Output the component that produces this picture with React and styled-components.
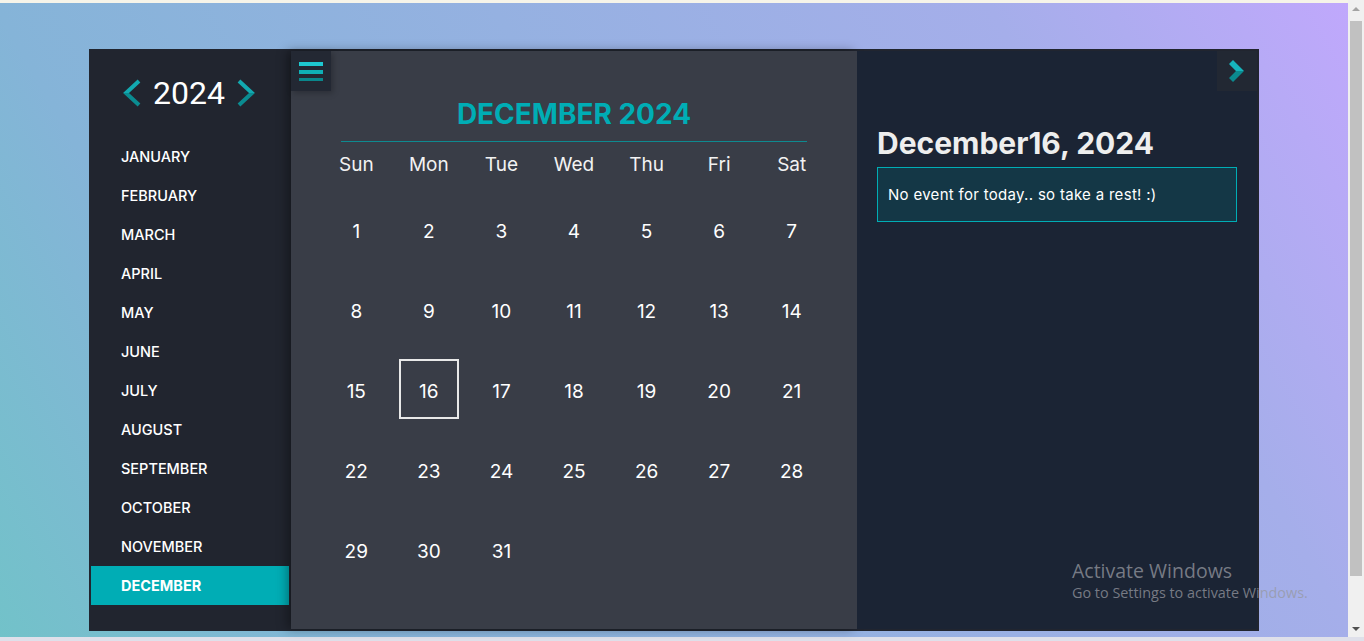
import React from 'react';
import styled, { createGlobalStyle } from 'styled-components';

const GlobalStyle = createGlobalStyle`
  html, body {
    margin: 0;
    padding: 0;
    height: 100%;
    overflow: hidden;
  }
  body {
    font-family: "Inter", "Noto Sans", sans-serif;
  }
  #root {
    height: 100%;
  }
`;

const MONTHS = [
  'JANUARY', 'FEBRUARY', 'MARCH', 'APRIL', 'MAY', 'JUNE',
  'JULY', 'AUGUST', 'SEPTEMBER', 'OCTOBER', 'NOVEMBER', 'DECEMBER',
];
const DAYS = ['Sun', 'Mon', 'Tue', 'Wed', 'Thu', 'Fri', 'Sat'];

const Page = styled.div`
  position: relative;
  height: 641px;
  display: flex;
  flex-direction: column;
`;

const Row = styled.div`
  flex: 1;
  display: flex;
  min-height: 0;
`;

const MainCol = styled.div`
  flex: 1;
  display: flex;
  flex-direction: column;
`;

const TopStrip = styled.div`
  height: 3px;
  background: #f6f4e9;
`;

const Stage = styled.div`
  flex: 1;
  display: flex;
  justify-content: center;
  align-items: flex-start;
  padding-top: 46px;
  background: linear-gradient(60deg, #72c2c9 0%, #85b4d8 21%, #a5aeea 79%, #c0a8fc 100%);
`;

const BottomStrip = styled.div`
  height: 4px;
  background: #dfe0ea;
`;

const Scrollbar = styled.div`
  width: 16px;
  background: #f0f0f0;
  display: flex;
  flex-direction: column;
  align-items: center;
`;

const ScrollArrow = styled.div`
  height: 17px;
  display: flex;
  align-items: center;
  justify-content: center;
  &::after {
    content: '';
    border-left: 4px solid transparent;
    border-right: 4px solid transparent;
    ${(p) => (p.$down
      ? 'border-top: 4px solid #505050;'
      : 'border-bottom: 4px solid #a3a3a3;')}
  }
`;

const ScrollThumb = styled.div`
  width: 12px;
  margin: 4px 0 44px;
  flex: 1;
  background: #c1c1c1;
`;

const Calendar = styled.div`
  width: 1170px;
  height: 582px;
  box-sizing: border-box;
  padding: 2px;
  display: flex;
  background: #21252f;
`;

const Sidebar = styled.aside`
  width: 200px;
  display: flex;
  flex-direction: column;
`;

const YearRow = styled.div`
  height: 36px;
  margin: 24px 0 26px;
  display: flex;
  align-items: center;
  justify-content: center;
  gap: 11px;
  padding-right: 4px;
`;

const Year = styled.span`
  font-family: "Roboto", "Liberation Sans", sans-serif;
  font-size: 32px;
  color: #ffffff;
  line-height: 36px;
`;

const MonthList = styled.ul`
  list-style: none;
  margin: 0;
  padding: 0;
`;

const MonthItem = styled.li`
  height: 39px;
  margin-right: 2px;
  padding-left: 30px;
  display: flex;
  align-items: center;
  font-size: 14.5px;
  font-weight: ${(p) => (p.$active ? 700 : 500)};
  color: #ffffff;
  background: ${(p) => (p.$active ? '#00adb5' : 'transparent')};
`;

const Middle = styled.section`
  position: relative;
  width: 566px;
  background: #393d47;
  box-shadow: -4px 0 10px rgba(0, 0, 0, 0.35);
  padding: 0 29px;
  box-sizing: border-box;
`;

const MenuButton = styled.div`
  position: absolute;
  top: 0;
  left: 0;
  width: 40px;
  height: 40px;
  background: #232833;
  display: flex;
  align-items: center;
  justify-content: center;
  box-shadow: 2px 2px 6px rgba(0, 0, 0, 0.25);
`;

const MonthHeader = styled.div`
  margin: 0 21px;
  padding: 40px 0 4px;
  border-bottom: 1px solid #0e8a90;
  text-align: center;
  font-size: 28px;
  font-weight: 700;
  line-height: 46px;
  color: #00adb5;
`;

const WeekRow = styled.div`
  display: grid;
  grid-template-columns: repeat(7, 1fr);
  margin-top: 2px;
`;

const WeekDay = styled.div`
  height: 40px;
  display: flex;
  align-items: center;
  justify-content: center;
  font-size: 19px;
  color: #f2f2f2;
`;

const Grid = styled.div`
  display: grid;
  grid-template-columns: repeat(7, 1fr);
  grid-auto-rows: 80px;
  margin-top: 8px;
`;

const DayCell = styled.div`
  display: flex;
  align-items: center;
  justify-content: center;
`;

const DayNum = styled.span`
  width: 60px;
  height: 60px;
  box-sizing: border-box;
  display: flex;
  align-items: center;
  justify-content: center;
  margin-top: -6px;
  padding-top: 4px;
  font-size: 19px;
  color: #ffffff;
  border: 2px solid ${(p) => (p.$today ? '#e8e8e8' : 'transparent')};
`;

const Details = styled.section`
  position: relative;
  flex: 1;
  background: #1b2434;
  padding: 74px 20px 0;
`;

const ToggleButton = styled.div`
  position: absolute;
  top: 0;
  right: 0;
  width: 40px;
  height: 40px;
  background: #222833;
  display: flex;
  align-items: center;
  justify-content: center;
`;

const DateTitle = styled.h2`
  margin: 0;
  font-size: 30px;
  font-weight: 700;
  line-height: 36px;
  color: #eeeeee;
`;

const EventBox = styled.div`
  margin-top: 6px;
  height: 55px;
  box-sizing: border-box;
  border: 1px solid #00adb5;
  background: #143746;
  padding: 0 10px;
  display: flex;
  align-items: center;
  font-size: 15px;
  letter-spacing: 0.3px;
  color: #ffffff;
`;

const Watermark = styled.div`
  position: absolute;
  left: 1072px;
  top: 559px;
  font-family: "Open Sans", "Noto Sans", sans-serif;
  color: rgba(150, 152, 160, 0.75);
  line-height: 1.2;
  pointer-events: none;
`;

const WatermarkTitle = styled.div`
  font-size: 19.5px;
`;

const WatermarkSub = styled.div`
  font-size: 14.4px;
  margin-top: 2px;
`;

const Angle = ({ dir }) => (
  <svg width="19" height="28" viewBox="0 0 19 28">
    <defs>
      <linearGradient id={`ang-${dir}`} x1="0" y1="0" x2="0" y2="1">
        <stop offset="0.5" stopColor="#12a9b0" />
        <stop offset="0.5" stopColor="#0a8c91" />
      </linearGradient>
    </defs>
    <polyline
      points={dir === 'left' ? '16,2 3,14 16,26' : '3,2 16,14 3,26'}
      fill="none"
      stroke={`url(#ang-${dir})`}
      strokeWidth="4"
    />
  </svg>
);

const Burger = () => (
  <svg width="24" height="20" viewBox="0 0 24 20">
    <rect x="0" y="1" width="24" height="4" fill="#1ec8d0" />
    <rect x="0" y="9" width="24" height="4" fill="#0fb0b6" />
    <rect x="0" y="17" width="24" height="4" fill="#0a878c" />
  </svg>
);

const Chevron = () => (
  <svg width="16" height="22" viewBox="0 0 16 22">
    <defs>
      <linearGradient id="chev" x1="0" y1="0" x2="0" y2="1">
        <stop offset="0.5" stopColor="#16b4bc" />
        <stop offset="0.5" stopColor="#0b8a8f" />
      </linearGradient>
    </defs>
    <path d="M0 4 L4 0 L15 11 L4 22 L0 18 L7 11 Z" fill="url(#chev)" />
  </svg>
);

const App = () => {
  const cells = [];
  for (let d = 1; d <= 31; d++) cells.push(d);

  return (
    <Page>
      <GlobalStyle />
      <Row>
        <MainCol>
          <TopStrip />
          <Stage>
            <Calendar>
              <Sidebar>
                <YearRow>
                  <Angle dir="left" />
                  <Year>2024</Year>
                  <Angle dir="right" />
                </YearRow>
                <MonthList>
                  {MONTHS.map((m) => (
                    <MonthItem key={m} $active={m === 'DECEMBER'}>{m}</MonthItem>
                  ))}
                </MonthList>
              </Sidebar>

              <Middle>
                <MenuButton><Burger /></MenuButton>
                <MonthHeader>DECEMBER 2024</MonthHeader>
                <WeekRow>
                  {DAYS.map((d) => <WeekDay key={d}>{d}</WeekDay>)}
                </WeekRow>
                <Grid>
                  {cells.map((d) => (
                    <DayCell key={d}>
                      <DayNum $today={d === 16}>{d}</DayNum>
                    </DayCell>
                  ))}
                </Grid>
              </Middle>

              <Details>
                <ToggleButton><Chevron /></ToggleButton>
                <DateTitle>December16, 2024</DateTitle>
                <EventBox>No event for today.. so take a rest! :)</EventBox>
              </Details>
            </Calendar>
          </Stage>
        </MainCol>
        <Scrollbar>
          <ScrollArrow />
          <ScrollThumb />
          <ScrollArrow $down />
        </Scrollbar>
      </Row>
      <BottomStrip />
      <Watermark>
        <WatermarkTitle>Activate Windows</WatermarkTitle>
        <WatermarkSub>Go to Settings to activate Windows.</WatermarkSub>
      </Watermark>
    </Page>
  );
};

export default App;
